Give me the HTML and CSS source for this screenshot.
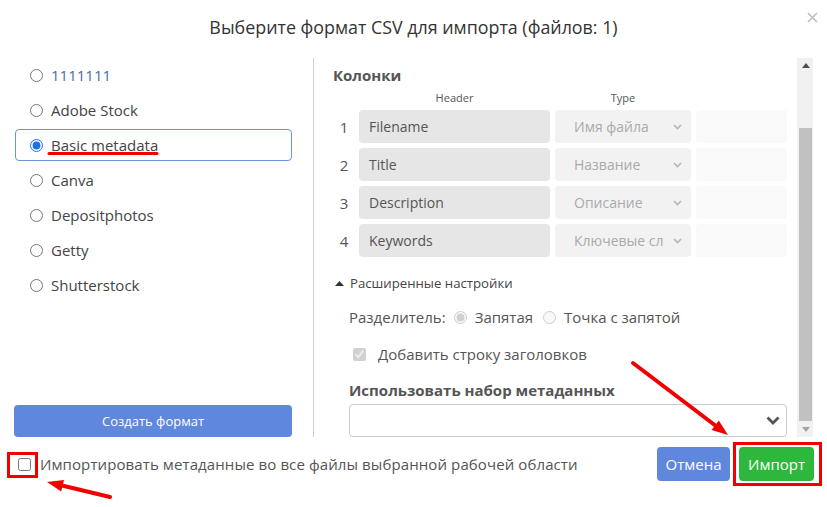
FILE: index.html
```html
<!DOCTYPE html>
<html lang="ru">
<head>
<meta charset="utf-8">
<title>Импорт CSV</title>
<link rel="stylesheet" href="styles.css">
</head>
<body>
<div class="dialog">
  <header class="dlg-head">
    <h1 class="title">Выберите формат CSV для импорта (файлов: 1)</h1>
    <button class="close" type="button" aria-label="Закрыть">
      <svg width="11" height="11" viewBox="0 0 11 11"><path d="M1 1L10 10M10 1L1 10" stroke="#bdbdbd" stroke-width="1.6" fill="none"/></svg>
    </button>
  </header>

  <main class="dlg-body">
    <aside class="formats">
      <ul class="format-list">
        <li class="format"><input type="radio" name="fmt" class="radio"><span class="custom">1111111</span></li>
        <li class="format"><input type="radio" name="fmt" class="radio"><span>Adobe Stock</span></li>
        <li class="format selected"><input type="radio" name="fmt" class="radio" checked><span>Basic metadata</span></li>
        <li class="format"><input type="radio" name="fmt" class="radio"><span>Canva</span></li>
        <li class="format"><input type="radio" name="fmt" class="radio"><span>Depositphotos</span></li>
        <li class="format"><input type="radio" name="fmt" class="radio"><span>Getty</span></li>
        <li class="format"><input type="radio" name="fmt" class="radio"><span>Shutterstock</span></li>
      </ul>
      <button class="btn btn-create" type="button">Создать формат</button>
    </aside>

    <section class="editor">
      <div class="editor-content">
        <h2 class="section-title">Колонки</h2>
        <div class="columns-grid">
          <span></span><span class="col-label">Header</span><span class="col-label">Type</span><span></span>

          <span class="row-num">1</span>
          <div class="field">Filename</div>
          <div class="type-select"><span>Имя файла</span><svg width="9" height="6" viewBox="0 0 9 6"><path d="M1 1L4.5 4.5L8 1" stroke="#b5b5b5" stroke-width="1.6" fill="none"/></svg></div>
          <div class="extra"></div>

          <span class="row-num">2</span>
          <div class="field">Title</div>
          <div class="type-select"><span>Название</span><svg width="9" height="6" viewBox="0 0 9 6"><path d="M1 1L4.5 4.5L8 1" stroke="#b5b5b5" stroke-width="1.6" fill="none"/></svg></div>
          <div class="extra"></div>

          <span class="row-num">3</span>
          <div class="field">Description</div>
          <div class="type-select"><span>Описание</span><svg width="9" height="6" viewBox="0 0 9 6"><path d="M1 1L4.5 4.5L8 1" stroke="#b5b5b5" stroke-width="1.6" fill="none"/></svg></div>
          <div class="extra"></div>

          <span class="row-num">4</span>
          <div class="field">Keywords</div>
          <div class="type-select"><span>Ключевые сл</span><svg width="9" height="6" viewBox="0 0 9 6"><path d="M1 1L4.5 4.5L8 1" stroke="#b5b5b5" stroke-width="1.6" fill="none"/></svg></div>
          <div class="extra"></div>
        </div>

        <div class="adv-toggle">
          <svg width="9" height="5" viewBox="0 0 9 5"><path d="M0 5L4.5 0L9 5Z" fill="#333"/></svg>
          <span>Расширенные настройки</span>
        </div>

        <div class="opt-row">
          <span>Разделитель:</span>
          <label class="opt"><input type="radio" name="sep" class="radio" checked disabled><span>Запятая</span></label>
          <label class="opt"><input type="radio" name="sep" class="radio" disabled><span>Точка с запятой</span></label>
        </div>

        <label class="check-row"><input type="checkbox" class="check" checked disabled><span>Добавить строку заголовков</span></label>

        <h3 class="meta-title">Использовать набор метаданных</h3>
        <div class="meta-select">
          <svg width="14" height="9" viewBox="0 0 14 9"><path d="M1.5 1.5L7 7L12.5 1.5" stroke="#555" stroke-width="2.8" fill="none"/></svg>
        </div>
      </div>
      <div class="scrollbar">
        <span class="sb-btn"><svg width="8" height="5" viewBox="0 0 8 5"><path d="M0 5L4 0L8 5Z" fill="#505050"/></svg></span>
        <span class="sb-space"></span>
        <span class="sb-thumb"></span>
        <span class="sb-btn sb-down"><svg width="8" height="5" viewBox="0 0 8 5"><path d="M0 0L4 5L8 0Z" fill="#a3a3a3"/></svg></span>
      </div>
    </section>
  </main>

  <footer class="dlg-foot">
    <label class="apply-all"><input type="checkbox" class="check"><span>Импортировать метаданные во все файлы выбранной рабочей области</span></label>
    <div class="actions">
      <button class="btn btn-cancel" type="button">Отмена</button>
      <button class="btn btn-import" type="button">Импорт</button>
    </div>
  </footer>

  <svg class="annot" width="827" height="507" viewBox="0 0 827 507">
    <line x1="49" y1="153.5" x2="157" y2="153.5" stroke="#f20000" stroke-width="3" stroke-linecap="round"/>
    <rect x="734.5" y="443.5" width="86" height="41" fill="none" stroke="#f20000" stroke-width="3"/>
    <rect x="8.5" y="453.5" width="28" height="23" fill="none" stroke="#f20000" stroke-width="3"/>
    <line x1="633" y1="363" x2="716" y2="426" stroke="#f20000" stroke-width="4" stroke-linecap="round"/>
    <polygon points="728,435 711.6,430.1 718.8,420.5" fill="#f20000"/>
    <line x1="110" y1="497" x2="62" y2="485.5" stroke="#f20000" stroke-width="4" stroke-linecap="round"/>
    <polygon points="47,482 64,479.9 61.2,491.5" fill="#f20000"/>
  </svg>
</div>
</body>
</html>
```

FILE: styles.css
```css
* { box-sizing: border-box; }

body {
  margin: 0;
  background: #fff;
  font-family: "Open Sans", "Noto Sans", sans-serif;
  color: #444;
}

.dialog {
  position: relative;
  width: 827px;
  height: 507px;
  display: flex;
  flex-direction: column;
  background: #fff;
}

/* header */
.dlg-head {
  display: grid;
  grid-template-columns: 1fr auto 1fr;
  height: 58px;
}
.title {
  grid-column: 2;
  margin: 14px 0 0;
  font-size: 17.85px;
  font-weight: 400;
  line-height: 26px;
  color: #333;
  white-space: nowrap;
}
.close {
  grid-column: 3;
  justify-self: end;
  align-self: start;
  margin: 12px 9px 0 0;
  width: 11px;
  height: 11px;
  padding: 0;
  border: 0;
  background: none;
  display: flex;
}

/* body */
.dlg-body {
  display: flex;
  height: 379px;
  padding: 0 14px;
}

.formats {
  width: 278px;
  flex: none;
  display: flex;
  flex-direction: column;
  justify-content: space-between;
}
.format-list {
  list-style: none;
  margin: 0;
  padding: 1px 0 0;
}
.format {
  display: flex;
  align-items: center;
  height: 32px;
  margin: 0 0 3px 1px;
  padding-left: 14px;
  border: 1px solid transparent;
  border-radius: 4px;
  font-size: 15px;
  color: #444;
}
.format.selected {
  border-color: #6b93dd;
}
.format .custom {
  color: #4c6ba6;
}
.radio {
  width: 13px;
  height: 13px;
  margin: 0 8px 0 0;
  flex: none;
  accent-color: #1a73e8;
}

.btn {
  border: 0;
  border-radius: 4px;
  color: #fff;
  font-family: inherit;
  cursor: pointer;
}
.btn-create {
  height: 32px;
  width: 100%;
  background: #5f87dc;
  font-size: 13px;
}

/* editor */
.editor {
  flex: 1;
  margin-left: 21px;
  display: flex;
  border-left: 1px solid #cfcfcf;
}
.editor-content {
  flex: 1;
  padding: 6px 10px 0 19px;
  overflow: hidden;
}
.section-title {
  margin: 0;
  font-size: 15px;
  font-weight: 700;
  line-height: 22px;
  color: #555;
}
.columns-grid {
  display: grid;
  grid-template-columns: 21px 191px 136px 91px;
  grid-template-rows: 15px;
  grid-auto-rows: 33px;
  column-gap: 5px;
  row-gap: 5px;
  margin-top: 4px;
}
.col-label {
  font-size: 11px;
  line-height: 15px;
  color: #555;
  text-align: center;
}
.row-num {
  display: flex;
  align-items: center;
  justify-content: center;
  padding-left: 1px;
  font-size: 15px;
  color: #555;
}
.field {
  display: flex;
  align-items: center;
  padding-left: 10px;
  background: #e6e6e6;
  border-radius: 4px;
  font-size: 14px;
  color: #555;
}
.type-select {
  display: flex;
  align-items: center;
  justify-content: space-between;
  padding: 0 9px 0 19px;
  background: #f2f2f2;
  border-radius: 4px;
  font-size: 14px;
  color: #aaa;
}
.extra {
  background: #f9f9f9;
  border-radius: 4px;
}

.adv-toggle {
  display: flex;
  align-items: center;
  gap: 6px;
  margin-top: 16px;
  padding-left: 2px;
  height: 20px;
  font-size: 13.2px;
  color: #444;
}
.opt-row {
  display: flex;
  align-items: center;
  margin-top: 13px;
  height: 22px;
  padding-left: 16px;
  font-size: 15px;
  color: #555;
}
.opt {
  display: flex;
  align-items: center;
  margin-left: 8px;
}
.opt + .opt { margin-left: 10px; }
.opt .radio { margin-right: 8px; }

.check-row {
  display: flex;
  align-items: center;
  margin-top: 15px;
  height: 22px;
  padding-left: 20px;
  font-size: 15px;
  color: #555;
}
.check {
  width: 13px;
  height: 13px;
  margin: 0 12px 0 0;
  flex: none;
}
.meta-title {
  margin: 14px 0 0;
  padding-left: 16px;
  font-size: 15px;
  font-weight: 700;
  line-height: 22px;
  color: #555;
}
.meta-select {
  margin: 3px 0 0 16px;
  height: 33px;
  border: 1px solid #cccccc;
  border-radius: 4px;
  display: flex;
  align-items: center;
  justify-content: flex-end;
  padding-right: 6px;
}

/* fake scrollbar */
.scrollbar {
  width: 16px;
  flex: none;
  display: flex;
  flex-direction: column;
  background: #f1f1f1;
}
.sb-btn {
  height: 15px;
  display: flex;
  align-items: center;
  justify-content: center;
  padding-left: 1px;
}
.sb-space { height: 55px; }
.sb-thumb {
  height: 293px;
  margin: 0 1px 1px 2px;
  background: #c1c1c1;
}

/* footer */
.dlg-foot {
  height: 70px;
  display: flex;
  align-items: center;
  padding: 10px 13px 26px 18px;
}
.apply-all {
  flex: 1;
  display: flex;
  align-items: center;
  font-size: 15px;
  letter-spacing: 0.1px;
  color: #555;
}
.apply-all .check { margin-right: 9px; }
.actions {
  display: flex;
  gap: 9px;
}
.btn-cancel,
.btn-import {
  height: 34px;
  font-size: 15px;
}
.btn-cancel {
  width: 73px;
  background: #5f87dc;
}
.btn-import {
  width: 75px;
  background: #2db83d;
}

/* annotations drawn over the screenshot */
.annot {
  position: absolute;
  left: 0;
  top: 0;
  pointer-events: none;
}
```
